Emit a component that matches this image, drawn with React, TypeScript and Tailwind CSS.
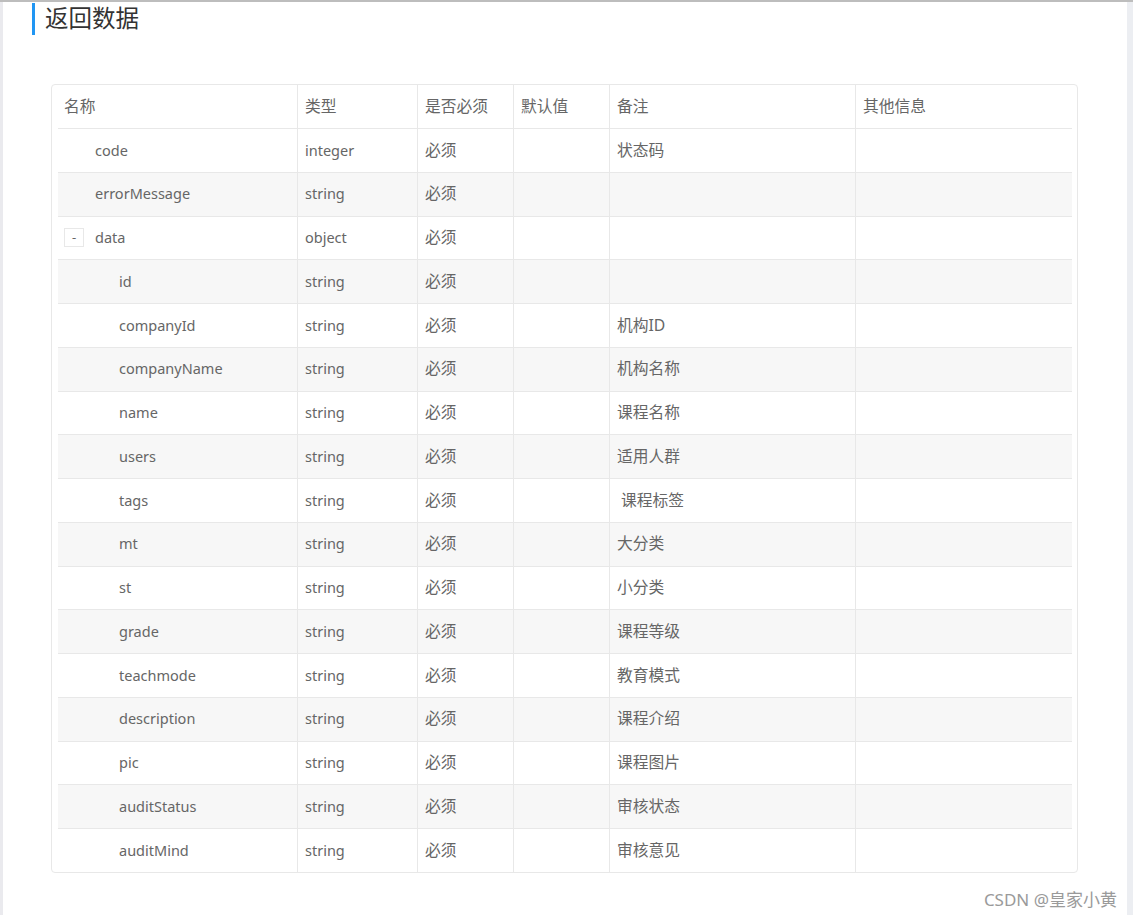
type Field = {
  name: string;
  type: string;
  required: string;
  def?: string;
  remark?: string;
  other?: string;
  level: number;
  expandable?: boolean;
};

const fields: Field[] = [
  { name: "code", type: "integer", required: "必须", remark: "状态码", level: 1 },
  { name: "errorMessage", type: "string", required: "必须", level: 1 },
  { name: "data", type: "object", required: "必须", level: 1, expandable: true },
  { name: "id", type: "string", required: "必须", level: 2 },
  { name: "companyId", type: "string", required: "必须", remark: "机构ID", level: 2 },
  { name: "companyName", type: "string", required: "必须", remark: "机构名称", level: 2 },
  { name: "name", type: "string", required: "必须", remark: "课程名称", level: 2 },
  { name: "users", type: "string", required: "必须", remark: "适用人群", level: 2 },
  { name: "tags", type: "string", required: "必须", remark: "\u00a0课程标签", level: 2 },
  { name: "mt", type: "string", required: "必须", remark: "大分类", level: 2 },
  { name: "st", type: "string", required: "必须", remark: "小分类", level: 2 },
  { name: "grade", type: "string", required: "必须", remark: "课程等级", level: 2 },
  { name: "teachmode", type: "string", required: "必须", remark: "教育模式", level: 2 },
  { name: "description", type: "string", required: "必须", remark: "课程介绍", level: 2 },
  { name: "pic", type: "string", required: "必须", remark: "课程图片", level: 2 },
  { name: "auditStatus", type: "string", required: "必须", remark: "审核状态", level: 2 },
  { name: "auditMind", type: "string", required: "必须", remark: "审核意见", level: 2 },
];

const gridCols = "grid grid-cols-[239px_120px_96px_96px_246px_1fr]";
// latin text a touch smaller, chinese a touch larger, to match widths
const cell = "flex items-center px-[7px] border-l border-[#e8e8e8] text-[14.5px]";
const cellZh = "flex items-center px-[7px] border-l border-[#e8e8e8] text-[15.75px]";

function NameCell({ f }: { f: Field }) {
  return (
    <div className="flex items-center pl-[6px] text-[14.5px]">
      {f.level === 2 && <span className="w-[24px] shrink-0" />}
      {f.expandable ? (
        <span className="w-[20px] h-[19px] shrink-0 border border-[#e8e8e8] flex items-center justify-center text-[13px] leading-none">
          -
        </span>
      ) : (
        <span className="w-[20px] shrink-0" />
      )}
      <span className="ml-[11px]">{f.name}</span>
    </div>
  );
}

export default function App() {
  return (
    <div
      className="w-[1133px] h-[915px] overflow-hidden bg-white border-t-2 border-[#bdbdbd] flex text-[#666]"
      style={{ fontFamily: '"Noto Sans", "Noto Sans CJK SC", sans-serif' }}
    >
      <div className="w-[3px] bg-[#eaeaee] shrink-0" />
      <div className="flex-1 flex flex-col">
        {/* title */}
        <div className="ml-[29px] mt-[1px] h-[32px] border-l-[3px] border-[#2196f3] pl-[10px] flex items-center text-[23.5px] text-[#333]">
          返回数据
        </div>

        {/* table */}
        <div className="ml-[48px] mt-[49px] w-[1027px] border border-[#e8e8e8] rounded-[4px] pl-[6px] pr-[5px]">
          <div className={`${gridCols} h-[43px]`}>
            <div className="flex items-center pl-[6px] text-[15.75px]">名称</div>
            <div className={cellZh}>类型</div>
            <div className={cellZh}>是否必须</div>
            <div className={cellZh}>默认值</div>
            <div className={cellZh}>备注</div>
            <div className={cellZh}>其他信息</div>
          </div>
          {fields.map((f, i) => (
            <div
              key={f.name}
              className={`${gridCols} h-[43.75px] border-t border-[#e8e8e8] ${
                i % 2 === 1 ? "bg-[#f7f7f7]" : "bg-white"
              }`}
            >
              <NameCell f={f} />
              <div className={cell}>{f.type}</div>
              <div className={cellZh}>{f.required}</div>
              <div className={cell}>{f.def}</div>
              <div className={cellZh}>{f.remark}</div>
              <div className={cell}>{f.other}</div>
            </div>
          ))}
        </div>

        <div className="mt-[14px] pr-[10px] text-right text-[17px] text-[#9a9a9a]">
          CSDN @皇家小黄
        </div>
      </div>
      <div className="w-[6px] bg-[#eceef2] shrink-0" />
    </div>
  );
}
